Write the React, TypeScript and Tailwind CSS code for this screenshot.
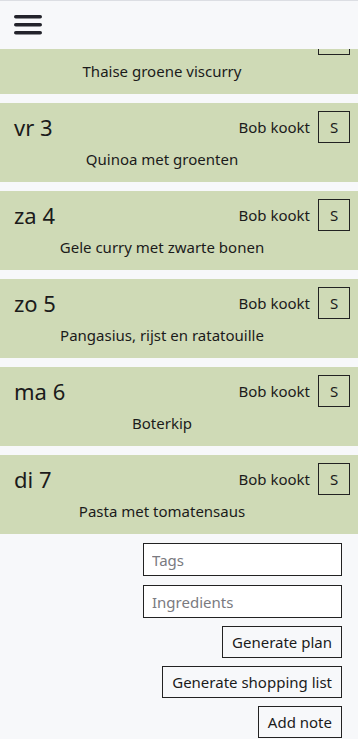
import React from "react";

const days = [
  { day: "do 2", meal: "Thaise groene viscurry" },
  { day: "vr 3", meal: "Quinoa met groenten" },
  { day: "za 4", meal: "Gele curry met zwarte bonen" },
  { day: "zo 5", meal: "Pangasius, rijst en ratatouille" },
  { day: "ma 6", meal: "Boterkip" },
  { day: "di 7", meal: "Pasta met tomatensaus" },
];

function Card({ day, meal }: { day: string; meal: string }) {
  return (
    <div className="bg-[#cfdab6] pt-2 pb-[11px] mb-[9px]">
      <div className="flex items-center h-8 pl-[14px] pr-2">
        <div className="text-[22px] leading-8 flex-1">{day}</div>
        <div className="text-[15px] leading-6 mr-2">Bob kookt</div>
        <button className="w-8 h-8 border-[1.5px] border-[#222] text-[15px] leading-none flex items-center justify-center">
          S
        </button>
      </div>
      <div className="mt-1 h-6 leading-6 text-[15px] text-center mr-[34px]">{meal}</div>
    </div>
  );
}

export default function App() {
  return (
    <div
      className="min-h-screen bg-[#f7f8fa] text-[#1b1b1b]"
      style={{ fontFamily: '"Noto Sans", "Open Sans", sans-serif' }}
    >
      <div className="fixed top-0 left-0 right-0 h-[49px] bg-[#f7f8fa] border-t border-[#dcdee3] z-10 flex items-center pl-[14px]">
        <svg width="28" height="20" viewBox="0 0 28 20" className="mt-[-1px]">
          <rect x="0" y="0" width="28" height="3.5" rx="1.75" fill="#23232b" />
          <rect x="0" y="8" width="28" height="3.5" rx="1.75" fill="#23232b" />
          <rect x="0" y="16" width="28" height="3.5" rx="1.75" fill="#23232b" />
        </svg>
      </div>
      <div className="pt-[15px]">
        {days.map((d) => (
          <Card key={d.day} day={d.day} meal={d.meal} />
        ))}
        <div className="flex flex-col items-end pr-4 gap-2 pb-4">
          <input
            placeholder="Tags"
            className="w-[199px] h-[33px] bg-white border-[1.5px] border-[#222] px-[8px] text-[15px] placeholder-[#7a7a80] outline-none"
          />
          <input
            placeholder="Ingredients"
            className="w-[199px] h-[33px] mt-px bg-white border-[1.5px] border-[#222] px-[8px] text-[15px] placeholder-[#7a7a80] outline-none"
          />
          <button className="h-8 px-[9px] border-[1.5px] border-[#222] text-[15px]">Generate plan</button>
          <button className="h-8 px-[9px] border-[1.5px] border-[#222] text-[15px]">Generate shopping list</button>
          <button className="h-8 px-[9px] border-[1.5px] border-[#222] text-[15px]">Add note</button>
        </div>
      </div>
    </div>
  );
}
